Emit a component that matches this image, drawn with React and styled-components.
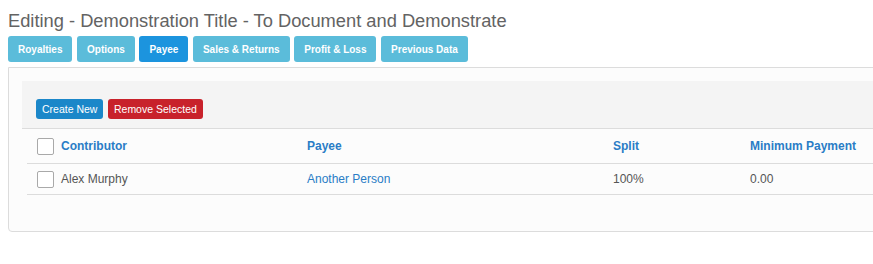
import React from "react";
import styled, { createGlobalStyle } from "styled-components";

const GlobalStyle = createGlobalStyle`
  html, body {
    margin: 0;
    padding: 0;
    background: #fff;
    overflow: hidden;
  }
  body {
    font-family: "Liberation Sans", Arial, sans-serif;
  }
`;

const Page = styled.div`
  padding: 11px 8px 0 8px;
`;

const Title = styled.h1`
  margin: 0 0 5px 0;
  font-size: 18.3px;
  line-height: 20px;
  font-weight: normal;
  color: #636363;
  white-space: nowrap;
`;

const Tabs = styled.div`
  display: flex;
  gap: 4.6px;
  margin-bottom: 5px;
`;

const Tab = styled.div`
  height: 26px;
  display: flex;
  align-items: center;
  padding: 0 10px;
  border-radius: 3px;
  font-size: 10px;
  font-weight: bold;
  color: #fff;
  background: ${(p) => (p.active ? "#1c94de" : "#5bbcda")};
  cursor: pointer;
`;

const Panel = styled.div`
  width: 1000px;
  background: #fcfcfc;
  border: 1px solid #dcdcdc;
  border-radius: 0 0 4px 4px;
  padding: 13px 13px 36px 13px;
  box-sizing: border-box;
`;

const Toolbar = styled.div`
  display: flex;
  gap: 4.5px;
  background: #f4f4f4;
  padding: 18px 14px 9px 14px;
  border-bottom: 1px solid #dcdcdc;
`;

const Button = styled.button`
  height: 20px;
  padding: 0 6px;
  border: none;
  border-radius: 3px;
  font-family: inherit;
  font-size: 10.5px;
  color: #fff;
  background: ${(p) => (p.danger ? "#c8222b" : "#1b87c9")};
  cursor: pointer;
`;

const Table = styled.div`
  margin: 0 5px;
`;

const Row = styled.div`
  display: grid;
  grid-template-columns: 270px 306px 137px 1fr;
  align-items: center;
  height: ${(p) => (p.head ? "34px" : "30px")};
  border-bottom: 1px solid #dcdcdc;
  font-size: 12px;
  font-weight: ${(p) => (p.head ? "bold" : "normal")};
  color: ${(p) => (p.head ? "#2a7dc6" : "#555")};
`;

const Cell = styled.div`
  display: flex;
  align-items: center;
  gap: 7px;
  padding-left: 10px;
  color: ${(p) => (p.link ? "#2a7dc6" : "inherit")};
`;

const Check = styled.span`
  width: 15px;
  height: 15px;
  border: 1px solid #a9a9a9;
  border-radius: 2px;
  background: #fff;
  display: inline-block;
`;

const tabs = ["Royalties", "Options", "Payee", "Sales & Returns", "Profit & Loss", "Previous Data"];

export default function App() {
  return (
    <Page>
      <GlobalStyle />
      <Title>Editing - Demonstration Title - To Document and Demonstrate</Title>
      <Tabs>
        {tabs.map((t) => (
          <Tab key={t} active={t === "Payee"}>
            {t}
          </Tab>
        ))}
      </Tabs>
      <Panel>
        <Toolbar>
          <Button>Create New</Button>
          <Button danger>Remove Selected</Button>
        </Toolbar>
        <Table>
          <Row head>
            <Cell>
              <Check />
              Contributor
            </Cell>
            <Cell>Payee</Cell>
            <Cell>Split</Cell>
            <Cell>Minimum Payment</Cell>
          </Row>
          <Row>
            <Cell>
              <Check />
              Alex Murphy
            </Cell>
            <Cell link>Another Person</Cell>
            <Cell>100%</Cell>
            <Cell>0.00</Cell>
          </Row>
        </Table>
      </Panel>
    </Page>
  );
}
